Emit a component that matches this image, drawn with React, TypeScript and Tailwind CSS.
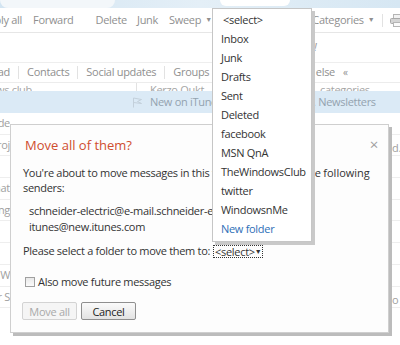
import React from 'react';

const font = { fontFamily: '"Open Sans", "Noto Sans", Arial, sans-serif' };

const folders = ['<select>', 'Inbox', 'Junk', 'Drafts', 'Sent', 'Deleted', 'facebook', 'MSN QnA', 'TheWindowsClub', 'twitter', 'WindowsnMe'];

// faded list rows behind the dialog
const rows = [
  { left: 'Ch de', right: '' },
  { left: 'Proj', right: 'd.' },
  { left: '', right: '' },
  { left: 'Chat', right: '' },
  { left: 'Bing', right: '' },
  { left: '', right: '' },
  { left: '', right: '' },
  { left: 'The W', right: '' },
  { left: 'Dr S', right: 'o' },
];

function Sep() {
  return <span className="w-px h-[13px] bg-[#e2e2e2] shrink-0" />;
}

function Printer() {
  return (
    <svg width="14" height="13" viewBox="0 0 14 13" fill="none">
      <rect x="3.5" y="0.5" width="7" height="4" fill="#f2f2f2" stroke="#b5b5b5" />
      <rect x="0.5" y="4.5" width="13" height="5" rx="1" fill="#d4d4d4" stroke="#a9a9a9" />
      <rect x="3.5" y="8.5" width="7" height="4" fill="#fafafa" stroke="#b5b5b5" />
    </svg>
  );
}

function Flag() {
  return (
    <svg width="11" height="11" viewBox="0 0 11 11" fill="none">
      <path d="M1.5 10.5 L1.5 1 L9.5 2.5 L5.5 4.5 L9.5 6.5 L1.5 5.5" stroke="#c3d0db" strokeWidth="1" />
    </svg>
  );
}

export default function App() {
  return (
    <div className="relative w-[400px] h-[345px] overflow-hidden bg-white text-[11px] tracking-[-0.3px] text-[#8f8f8f]" style={font}>
      {/* header strip */}
      <div className="h-[8px] bg-gradient-to-r from-[#d3e5f2] via-[#e4eff7] to-[#d6e7f3] flex">
        <div className="w-[115px] h-[8px] rounded-b-[12px] bg-[#f3f7fa]" />
        <div className="flex-1" />
        <div className="w-[70px] h-[6px] rounded-b-[20px] bg-white mr-[110px]" />
      </div>

      {/* toolbar */}
      <div className="h-[25px] flex items-center whitespace-nowrap border-b border-[#e6e6e6]">
        <div className="w-[22px] overflow-hidden flex justify-end shrink-0">Reply all</div>
        <span className="ml-[11px]">Forward</span>
        <span className="ml-[11px]"><Sep /></span>
        <span className="ml-[11px]">Delete</span>
        <span className="ml-[10px]">Junk</span>
        <span className="ml-[11px] flex items-center gap-[4px]">Sweep <span className="text-[7px]">▼</span></span>
        <span className="ml-[11px]">Move to</span>
        <span className="ml-[50px] flex items-center gap-[4px]">Categories <span className="text-[7px]">▼</span></span>
        <span className="ml-[8px] flex"><Sep /></span>
        <span className="ml-[7px] flex"><Printer /></span>
      </div>

      {/* search area */}
      <div className="h-[30px] flex items-center border-b border-[#eeeeee]">
        <span className="ml-[288px] italic text-[#9a9a9a]">world!</span>
      </div>

      {/* tabs */}
      <div className="h-[20px] flex items-center whitespace-nowrap border-b border-[#ececec]">
        <div className="w-[290px] flex items-center gap-[8px] overflow-hidden shrink-0">
          <div className="w-[10px] overflow-hidden flex justify-end shrink-0">Unread</div>
          <Sep />
          <span>Contacts</span>
          <Sep />
          <span>Social updates</span>
          <Sep />
          <span>Groups</span>
          <Sep />
          <span>Newsletters</span>
        </div>
        <div className="w-[45px] overflow-hidden flex justify-end shrink-0">Everything else</div>
        <span className="ml-[8px] text-[10px]">«</span>
      </div>

      {/* clipped row */}
      <div className="h-[8px] overflow-hidden flex whitespace-nowrap text-[#a5a5a5]">
        <div className="w-[32px] -mt-[1px] overflow-hidden flex justify-end shrink-0">Windows club</div>
        <span className="ml-[104px] w-px h-full bg-[#e2e2e2]" />
        <span className="ml-[13px] -mt-[1px] w-[170px]">Kerzo Oukt</span>
        <span className="-mt-[1px]">categories</span>
      </div>

      {/* selected row */}
      <div className="h-[22px] bg-[#dbeaf6] flex items-center whitespace-nowrap text-[#93a2af]">
        <span className="w-[132px]" />
        <Flag />
        <span className="ml-[7px] w-[163px]">New on iTunes</span>
        <span>. Newsletters</span>
      </div>

      {/* rows under the dialog */}
      {rows.map((r, i) => (
        <div key={i} className="h-[21.7px] flex border-b border-[#eeeeee] whitespace-nowrap text-[#a0a0a0]">
          <div className="w-[10px] overflow-hidden flex justify-end pt-[2px]">{r.left}</div>
          <div className="flex-1" />
          <div className="w-[8px] overflow-hidden pt-[5px]">{r.right}</div>
        </div>
      ))}

      {/* dialog */}
      <div className="absolute left-[10px] top-[124px] w-[379px] h-[209px] bg-[#fdfdfd] border border-[#cfcfcf] shadow-[3px_3px_0_#bcbcbc] px-[12px] pt-[10px] text-[#333333]">
        <div className="flex items-center justify-between">
          <div className="text-[13px] tracking-normal leading-[20px] text-[#cf4d2f] ml-[2px]">Move all of them?</div>
          <div className="text-[15px] leading-none text-[#a0a0a0] -mr-[2px] -mt-[2px]">×</div>
        </div>
        <div className="mt-[10px] leading-[15px] whitespace-nowrap">
          You're about to move messages in this folder sent by<span className="inline-block w-[24px]" /> the <span className="tracking-[0px]">following</span><br />senders:
        </div>
        <div className="mt-[8px] pl-[6px] leading-[16px] whitespace-nowrap">
          <div>schneider-electric@e-mail.schneider-electric.com</div>
          <div>itunes@new.itunes.com</div>
        </div>
        <div className="mt-[8px] leading-[16px] flex items-center whitespace-nowrap">
          Please select a folder to move them to:
          <span className="ml-[3px] h-[13px] w-[50px] border border-dotted border-[#333] flex items-center justify-between leading-none pl-[1px] pr-[2px]">
            &lt;select&gt;<span className="text-[7px]">▼</span>
          </span>
        </div>
        <div className="mt-[15px] leading-[16px] flex items-center gap-[3px]">
          <span className="w-[10px] h-[10px] border border-[#a0a0a0] bg-gradient-to-b from-[#e9e9e9] to-[#fbfbfb] ml-[2px]" />
          Also move future messages
        </div>
        <div className="mt-[12px] flex gap-[4px] -ml-[1px]">
          <button className="w-[55px] h-[18px] border border-[#d3d3d3] bg-[#f5f5f5] text-[#a9a9a9] rounded-[2px] leading-none">Move all</button>
          <button className="w-[55px] h-[18px] border border-[#8f8f8f] bg-gradient-to-b from-[#fbfbfb] to-[#e3e3e3] text-[#222] rounded-[2px] leading-none">Cancel</button>
        </div>
      </div>

      {/* open select list */}
      <div className="absolute left-[212px] top-[8px] w-[100px] h-[234px] bg-white border border-[#c6c6c6] shadow-[3px_3px_0_#c9c9c9] py-[1px] text-[#333333]">
        {folders.map((f) => (
          <div key={f} className={`h-[19px] leading-[19px] ${f === '<select>' ? 'pl-[10px]' : 'pl-[8px]'}`}>{f}</div>
        ))}
        <div className="h-[19px] leading-[19px] pl-[8px] text-[#2e6fb7]">New folder</div>
      </div>
    </div>
  );
}
